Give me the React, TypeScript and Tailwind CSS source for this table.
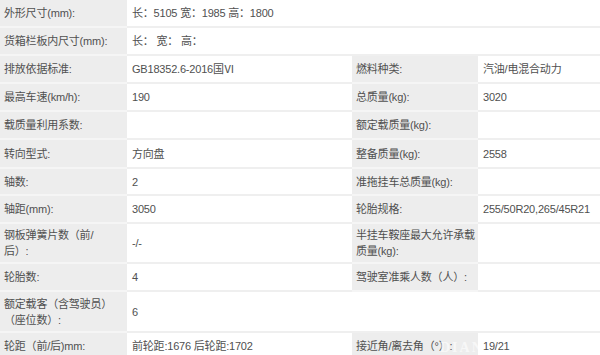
import React from "react";

type Cell = { label: React.ReactNode; value?: string };

interface Row {
  left: Cell;
  right?: Cell; // when missing, the left value spans the rest of the row
  h: string;
}

const rows: Row[] = [
  { left: { label: "外形尺寸(mm):", value: "长：5105 宽：1985 高：1800" }, h: "h-[27px]" },
  { left: { label: "货箱栏板内尺寸(mm):", value: "长：  宽：  高：" }, h: "h-[28px]" },
  {
    left: { label: "排放依据标准:", value: "GB18352.6-2016国Ⅵ" },
    right: { label: "燃料种类:", value: "汽油/电混合动力" },
    h: "h-[28px]",
  },
  {
    left: { label: "最高车速(km/h):", value: "190" },
    right: { label: "总质量(kg):", value: "3020" },
    h: "h-[28px]",
  },
  {
    left: { label: "载质量利用系数:", value: "" },
    right: { label: "额定载质量(kg):", value: "" },
    h: "h-[28px]",
  },
  {
    left: { label: "转向型式:", value: "方向盘" },
    right: { label: "整备质量(kg):", value: "2558" },
    h: "h-[29px]",
  },
  {
    left: { label: "轴数:", value: "2" },
    right: { label: "准拖挂车总质量(kg):", value: "" },
    h: "h-[27px]",
  },
  {
    left: { label: "轴距(mm):", value: "3050" },
    right: { label: "轮胎规格:", value: "255/50R20,265/45R21" },
    h: "h-[28px]",
  },
  {
    left: {
      label: (
        <>
          钢板弹簧片数（前/
          <br />
          后）:
        </>
      ),
      value: "-/-",
    },
    right: {
      label: (
        <>
          半挂车鞍座最大允许承载
          <br />
          质量(kg):
        </>
      ),
      value: "",
    },
    h: "h-[40px]",
  },
  {
    left: { label: "轮胎数:", value: "4" },
    right: { label: "驾驶室准乘人数（人）:", value: "" },
    h: "h-[28px]",
  },
  {
    left: {
      label: (
        <>
          额定载客（含驾驶员）
          <br />
          （座位数）:
        </>
      ),
      value: "6",
    },
    h: "h-[41px]",
  },
  {
    left: { label: "轮距（前/后)mm:", value: "前轮距:1676 后轮距:1702" },
    right: { label: "接近角/离去角（°）:", value: "19/21" },
    h: "h-[28px]",
  },
];

function Label({ text }: { text: React.ReactNode }) {
  return (
    <td className="bg-[#ededed] pl-[4px] pr-0 align-middle leading-[16px] border-b-2 border-[#f5f5f5] whitespace-nowrap">
      {text}
    </td>
  );
}

function Value({ text, span }: { text?: string; span?: number }) {
  return (
    <td
      colSpan={span}
      className="bg-white pl-[5px] pr-0 align-middle leading-[16px] border-b-2 border-[#efefef] whitespace-nowrap"
    >
      {text}
    </td>
  );
}

export default function App() {
  return (
    <div
      className="relative w-[600px] h-[355px] overflow-hidden bg-white text-[11px] tracking-[-0.2px] text-[#505050]"
      style={{ fontFamily: '"Liberation Sans", "Noto Sans CJK SC", sans-serif' }}
    >
      <table className="w-[600px] table-fixed border-collapse">
        <colgroup>
          <col className="w-[127px]" />
          <col className="w-[225px]" />
          <col className="w-[126px]" />
          <col className="w-[122px]" />
        </colgroup>
        <tbody>
          {rows.map((r, i) => (
            <tr key={i} className={r.h}>
              <Label text={r.left.label} />
              {r.right ? (
                <>
                  <Value text={r.left.value} />
                  <Label text={r.right.label} />
                  <Value text={r.right.value} />
                </>
              ) : (
                <Value text={r.left.value} span={3} />
              )}
            </tr>
          ))}
        </tbody>
      </table>
      {/* faint watermark over the last row */}
      <div
        className="pointer-events-none absolute left-[440px] top-[337px] text-[14px] font-bold tracking-[2px] text-white/60"
        style={{ fontFamily: '"Liberation Serif", serif' }}
      >
        DIAN
      </div>
    </div>
  );
}
